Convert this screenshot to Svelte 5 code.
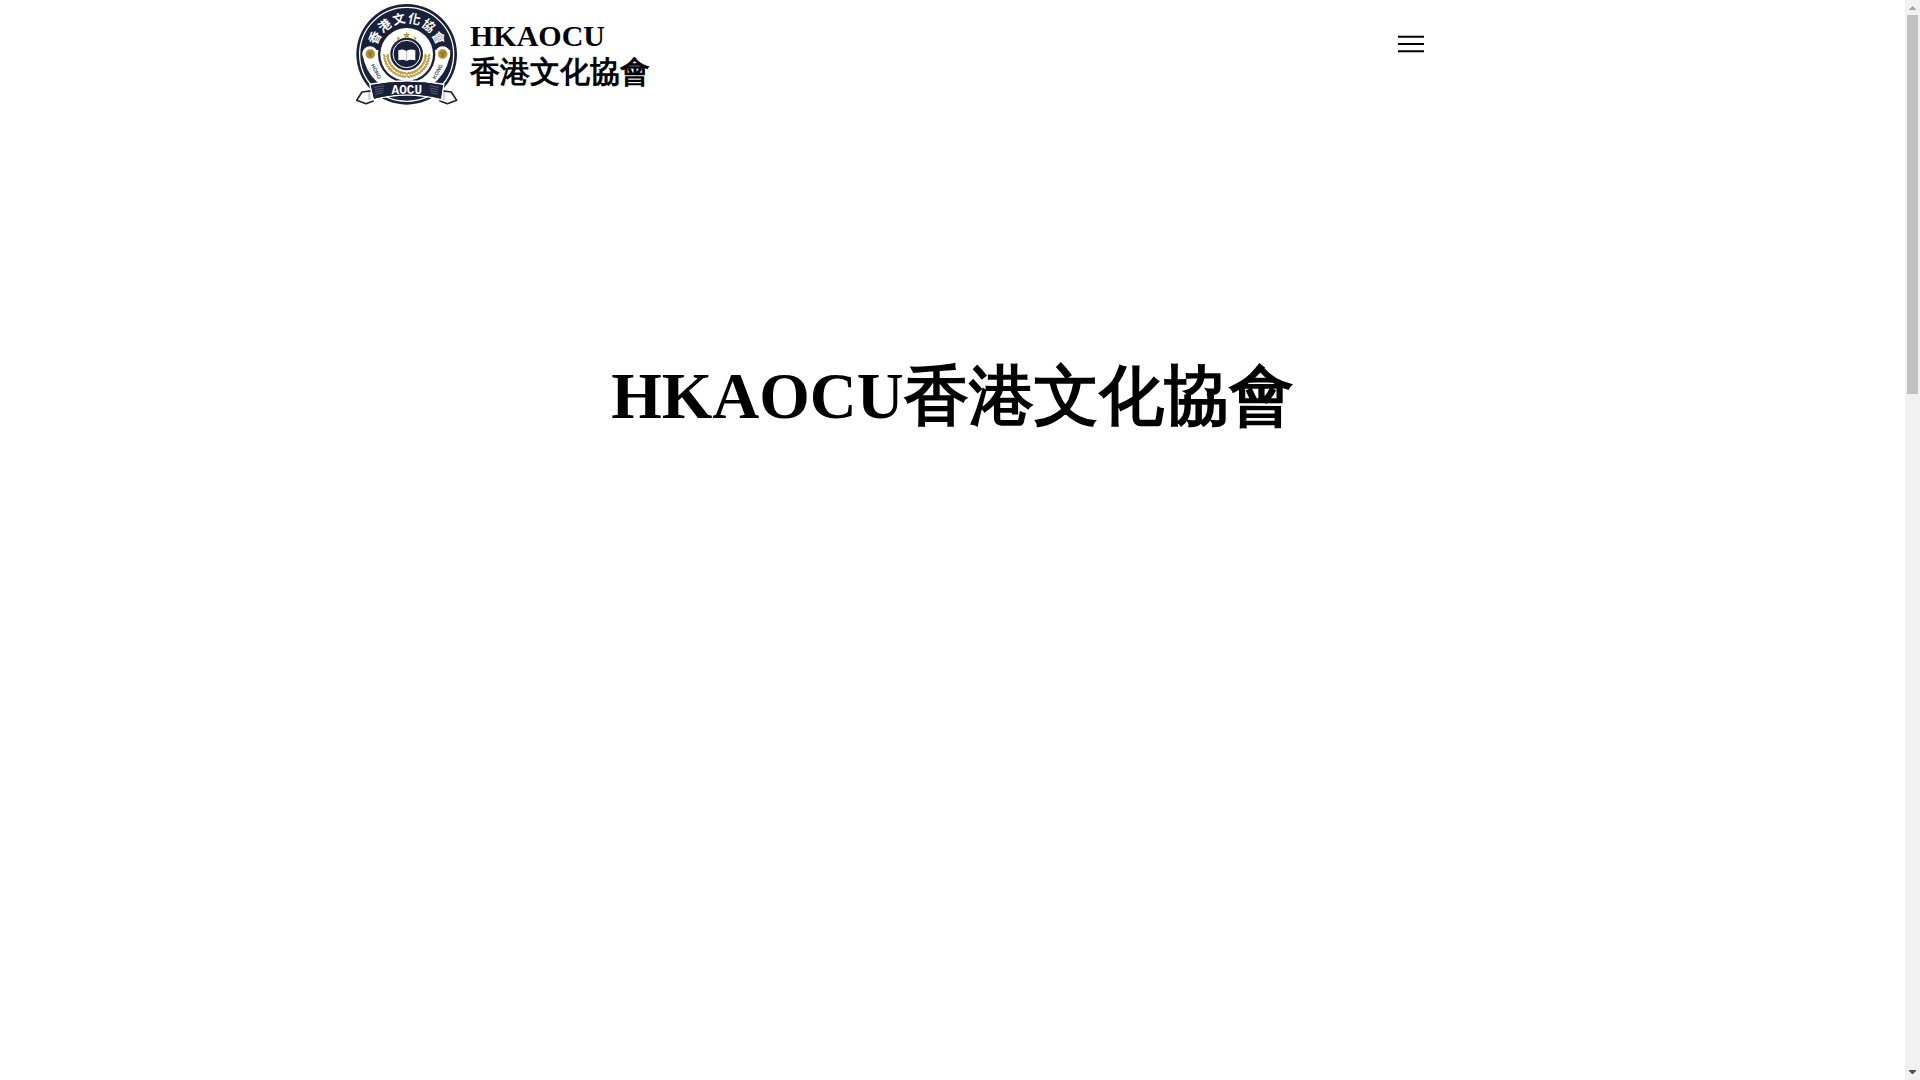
<script>
  const arc = [...'香港文化協會'].map((char, i) => ({ char, angle: -62.5 + i * 25 }));
  const leaves = [];
  for (const side of [-1, 1]) {
    for (let i = 0; i < 12; i++) {
      for (const r of [57, 67]) {
        const a = side * (4 + i * 7.5);
        leaves.push({ r, a, tilt: side * 35 * (r === 57 ? 1 : -1) });
      }
    }
  }
</script>

<svelte:head><title>HKAOCU香港文化協會</title></svelte:head>

<div class="page">
  <div class="content">
    <header>
      <a class="brand" href="#top">
        <svg class="logo" viewBox="0 0 336 330" role="img" aria-label="HKAOCU">
          <circle cx="170" cy="163" r="151" fill="#192039" />
          <circle cx="170" cy="163" r="141" fill="none" stroke="#fff" stroke-width="4" />
          <path d="M39 150H301A132 132 0 0 1 38 163Z" fill="#fff" />
          <circle cx="60" cy="162" r="23" fill="#fff" />
          <circle cx="278" cy="162" r="23" fill="#fff" />
          <circle cx="170" cy="163" r="86" fill="#192039" />
          <circle cx="170" cy="163" r="79" fill="#fff" />
          {#each arc as item}
            <g transform="rotate({item.angle} 170 163)">
              <text class="arc" x="170" y="69">{item.char}</text>
            </g>
          {/each}
          {#each leaves as leaf}
            <ellipse cx="170" cy={163 + leaf.r} rx="6" ry="3" fill="#bd9a3c"
              transform="rotate({leaf.a} 170 163) rotate({leaf.tilt} 170 {163 + leaf.r})" />
          {/each}
          <circle cx="170" cy="162" r="49" fill="#192039" />
          <circle cx="170" cy="162" r="41" fill="none" stroke="#fff" stroke-width="3" />
          <path d="M145 151Q160 145 169 153Q179 145 196 151V181Q179 176 170 183Q160 176 145 181Z" fill="#fff" />
          <path d="M170 154V181" stroke="#8b90a0" stroke-width="2" />
          <path d="M170 94l3 8h9l-7 5 3 9-8-5-8 5 3-9-7-5h9z" fill="#bd9a3c" />
          <path d="M145 109l2 4h4l-3 3 1 5-4-3-4 3 1-5-3-3h4zM195 109l2 4h4l-3 3 1 5-4-3-4 3 1-5-3-3h4z" fill="#bd9a3c" />
          <g fill="#b08f32" stroke="#d0b566" stroke-width="2">
            <circle cx="61" cy="162" r="14" /><circle cx="278" cy="162" r="14" />
          </g>
          <path d="M54 155l7 8 7-8M61 163v8M271 155l7 8 7-8M278 163v8" fill="none" stroke="#765d20" stroke-width="3" />
          <text class="place" transform="translate(77 215) rotate(62)">HONG</text>
          <text class="place" transform="translate(264 215) rotate(-62)">KONG</text>
          <path d="M68 272L36 276 20 301 48 311 72 302M272 272L304 276 320 301 292 311 268 302" fill="#fff" stroke="#192039" stroke-width="5" stroke-linejoin="round" />
          <path d="M57 276l2 24M283 276l-2 24" stroke="#d3d5db" stroke-width="8" />
          <path d="M60 253Q170 232 281 253L274 299Q170 271 70 299Z" fill="#192039" stroke="#fff" stroke-width="5" />
          <path d="M62 255Q170 235 279 255L273 296Q170 269 72 296Z" fill="#192039" />
          <path d="M72 262l30-5M74 269l28-5M75 276l26-5M76 283l22-5M239 257l28 5M239 264l26 5M240 271l24 5M243 278l20 5" stroke="#757b8e" stroke-width="2" />
          <text class="ribbon" y="281"><tspan x="136">A</tspan><tspan x="159">O</tspan><tspan x="182">C</tspan><tspan x="205">U</tspan></text>
        </svg>
        <span class="name">HKAOCU<br />香港文化協會</span>
      </a>
      <button class="menu" aria-label="Menu">
        <svg viewBox="0 0 26 18" aria-hidden="true">
          <path d="M0 1.7H26M0 9H26M0 16.3H26" stroke="#000" stroke-width="2" />
        </svg>
      </button>
    </header>
    <main id="top"><h1>HKAOCU香港文化協會</h1></main>
  </div>
  <div class="scrollbar" aria-hidden="true">
    <svg viewBox="0 0 15 15"><path d="M4 10h7v-1h-1v-1h-1v-1h-1v-1h-1v1h-1v1h-1v1h-1z" fill="#a3a3a3" /></svg>
    <div class="track"><div class="thumb"></div></div>
    <svg viewBox="0 0 15 15"><path d="M4 5h7v1l-3 3h-1l-3-3z" fill="#505050" /></svg>
  </div>
</div>

<style>
  :global(body) {
    margin: 0;
    background: #fff;
    color: #000;
  }
  .page {
    display: flex;
    height: 100vh;
    font-family: 'Liberation Serif', serif;
  }
  .content {
    flex: 1;
    min-width: 0;
  }
  header {
    display: flex;
    justify-content: space-between;
    align-items: flex-start;
    max-width: 1205px;
    margin: 0 auto;
    box-sizing: border-box;
    padding-right: 131px;
  }
  .brand {
    display: flex;
    align-items: center;
    gap: 8px;
    color: inherit;
    text-decoration: none;
  }
  .logo {
    width: 112px;
    height: 110px;
  }
  .name {
    padding-bottom: 2px;
    font-size: 30px;
    font-weight: 700;
    line-height: 36px;
  }
  .arc {
    font: 700 38px 'Noto Sans CJK TC', sans-serif;
    fill: #fff;
    text-anchor: middle;
  }
  .place {
    font: 700 16px 'Liberation Sans', sans-serif;
    fill: #454b5c;
    text-anchor: middle;
    dominant-baseline: middle;
  }
  .ribbon {
    font: 700 38px 'Liberation Sans Narrow', 'Liberation Mono', serif;
    fill: #fff;
    text-anchor: middle;
  }
  .menu {
    display: flex;
    margin: 35px 0 0;
    padding: 0;
    border: 0;
    background: none;
    cursor: pointer;
  }
  .menu svg {
    width: 26px;
    height: 18px;
  }
  h1 {
    margin: 240px 0 0;
    font-size: 65px;
    font-weight: 700;
    line-height: 92px;
    text-align: center;
  }
  .scrollbar {
    display: flex;
    flex-direction: column;
    width: 15px;
    background: #f1f1f1;
  }
  .scrollbar svg {
    display: block;
    width: 15px;
    height: 15px;
  }
  .track {
    flex: 1;
    padding: 0 2px;
  }
  .thumb {
    height: 36.1%;
    background: #c1c1c1;
  }
</style>
